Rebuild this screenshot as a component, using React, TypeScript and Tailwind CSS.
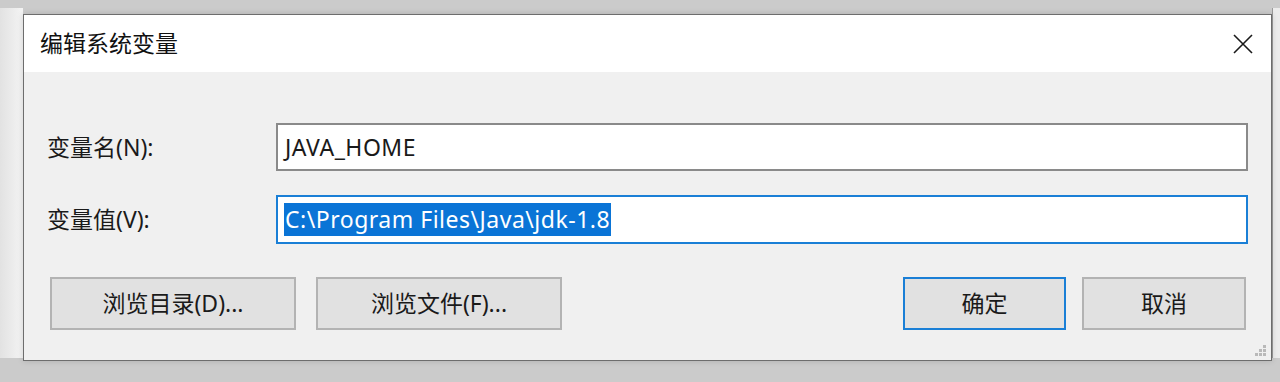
import React from 'react'

const cjk = '"Segoe UI", "Noto Sans", "Noto Sans CJK SC", sans-serif'

function Grip() {
  const dots = [
    [8, 0],
    [4, 4], [8, 4],
    [0, 8], [4, 8], [8, 8],
  ]
  return (
    <svg width="12" height="12" className="absolute right-[4px] bottom-[3px]" aria-hidden="true">
      {dots.map(([x, y], i) => (
        <rect key={i} x={x} y={y} width="3" height="3" fill="#b9b9b9" />
      ))}
    </svg>
  )
}

export default function App() {
  return (
    <div className="w-[1280px] h-[382px] bg-[#cbcbcb] flex overflow-hidden" style={{ fontFamily: cjk }}>
      {/* background window edge */}
      <div className="w-[23px] shrink-0 mt-[8px] h-[350px] bg-gradient-to-r from-[#e2e2e2] to-[#f4f4f4]" />

      {/* Dialog */}
      <div className="relative mt-[14px] w-[1249px] h-[347px] shrink-0 border border-[#6d6d6d] bg-[#f0f0f0] flex flex-col shadow-[0_0_6px_rgba(0,0,0,0.15)]">
        <div className="h-[57px] bg-white flex items-center justify-between pl-[16px] pr-[18px] shrink-0">
          <span className="text-[23px] text-[#111]">编辑系统变量</span>
          <svg width="20" height="20" viewBox="0 0 20 20" aria-hidden="true">
            <path d="M1 1 L19 19 M19 1 L1 19" stroke="#1a1a1a" strokeWidth="1.6" fill="none" />
          </svg>
        </div>

        <div className="flex-1 px-[23px] pt-[51px] text-[23px] text-[#1a1a1a]">
          <div className="grid grid-cols-[229px_1fr] gap-y-[24px] items-center">
            <label>变量名(N):</label>
            <div className="h-[48px] bg-white border-2 border-[#8a8a8a] flex items-center pl-[7px] tracking-[0.5px]">
              JAVA_HOME
            </div>
            <label>变量值(V):</label>
            <div className="h-[49px] bg-white border-2 border-[#1a7fd6] flex items-center pl-[6px] tracking-[0.5px]">
              <span className="bg-[#0a74d6] text-white px-[1px] leading-[33px]">C:\Program Files\Java\jdk-1.8</span>
            </div>
          </div>

          <div className="flex mt-[33px] pl-[3px] pr-[2px]">
            <div className="flex gap-[20px]">
              <button className="w-[246px] h-[53px] bg-[#e1e1e1] border-2 border-[#b3b3b3]">浏览目录(D)...</button>
              <button className="w-[246px] h-[53px] bg-[#e1e1e1] border-2 border-[#b3b3b3]">浏览文件(F)...</button>
            </div>
            <div className="flex gap-[16px] ml-auto">
              <button className="w-[163px] h-[53px] bg-[#e1e1e1] border-2 border-[#1a7fd6]">确定</button>
              <button className="w-[164px] h-[53px] bg-[#e1e1e1] border-2 border-[#b3b3b3]">取消</button>
            </div>
          </div>
        </div>
        <Grip />
      </div>

      {/* right background window edge */}
      <div className="flex-1 mt-[8px] h-[350px] bg-[#ececec] border-l border-[#9a9a9a]" />
    </div>
  )
}
